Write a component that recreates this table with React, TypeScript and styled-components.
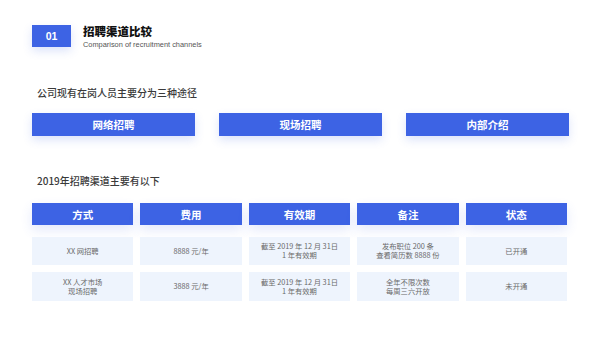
import React from "react";
import styled, { createGlobalStyle } from "styled-components";

const Global = createGlobalStyle`
  html, body { margin: 0; padding: 0; background: #ffffff; }
  body { font-family: "Noto Sans CJK SC", "Noto Sans", "Liberation Sans", sans-serif; }
  * { box-sizing: border-box; }
`;

const BLUE = "#3d63e4";

const Page = styled.div`
  width: 600px;
  height: 337px;
  background: #ffffff;
  padding: 25px 33px 0 32px;
  display: flex;
  flex-direction: column;
  overflow: hidden;
`;

const Header = styled.div`
  display: flex;
  align-items: flex-start;
  gap: 12px;
`;

const Badge = styled.div`
  width: 39px;
  height: 22px;
  background: ${BLUE};
  color: #fff;
  font-family: "Liberation Sans", sans-serif;
  font-weight: 700;
  font-size: 10.5px;
  display: flex;
  align-items: center;
  justify-content: center;
  box-shadow: 0 4px 10px rgba(61, 99, 228, 0.18);
`;

const TitleBlock = styled.div`
  display: flex;
  flex-direction: column;
  margin-top: -1px;
`;

const Title = styled.div`
  font-size: 11.5px;
  font-weight: 900;
  color: #111;
  line-height: 15px;
`;

const Subtitle = styled.div`
  font-family: "Liberation Sans", sans-serif;
  font-size: 7.4px;
  color: #555;
  line-height: 9px;
  margin-top: 1px;
`;

const SectionLabel = styled.div<{ $top: number }>`
  margin-top: ${(p) => p.$top}px;
  margin-left: 5px;
  font-size: 10px;
  color: #3a3a3a;
  font-weight: 500;
  line-height: 14px;
`;

const ButtonRow = styled.div`
  margin-top: 13px;
  display: grid;
  grid-template-columns: repeat(3, 163px);
  column-gap: 24px;
`;

const ChannelButton = styled.div`
  height: 23px;
  background: ${BLUE};
  color: #fff;
  font-size: 10.5px;
  font-weight: 700;
  display: flex;
  align-items: center;
  justify-content: center;
  box-shadow: 0 4px 10px rgba(61, 99, 228, 0.18);
`;

const Table = styled.div`
  margin-top: 15px;
  display: grid;
  grid-template-columns: repeat(5, 1fr);
  column-gap: 7px;
  width: 535px;
`;

const HeadCell = styled.div`
  height: 22px;
  background: ${BLUE};
  color: #fff;
  font-size: 10.5px;
  font-weight: 700;
  display: flex;
  align-items: center;
  justify-content: center;
  box-shadow: 0 5px 12px rgba(61, 99, 228, 0.14);
  margin-bottom: 12px;
`;

const BodyCell = styled.div<{ $h: number }>`
  height: ${(p) => p.$h}px;
  background: #eef4fd;
  color: #6a6a6a;
  font-size: 7.3px;
  line-height: 9px;
  text-align: center;
  display: flex;
  flex-direction: column;
  align-items: center;
  justify-content: center;
  margin-bottom: 7px;
`;

const heads = ["方式", "费用", "有效期", "备注", "状态"];
const rows: { h: number; cells: string[][] }[] = [
  {
    h: 28,
    cells: [
      ["XX 网招聘"],
      ["8888 元/年"],
      ["截至 2019 年 12 月 31日", "1 年有效期"],
      ["发布职位 200 条", "查看简历数 8888 份"],
      ["已开通"],
    ],
  },
  {
    h: 29,
    cells: [
      ["XX 人才市场", "现场招聘"],
      ["3888 元/年"],
      ["截至 2019 年 12 月 31日", "1 年有效期"],
      ["全年不限次数", "每周三六开放"],
      ["未开通"],
    ],
  },
];

export default function App() {
  return (
    <>
      <Global />
      <Page>
        <Header>
          <Badge>01</Badge>
          <TitleBlock>
            <Title>招聘渠道比较</Title>
            <Subtitle>Comparison of recruitment channels</Subtitle>
          </TitleBlock>
        </Header>
        <SectionLabel $top={37}>公司现有在岗人员主要分为三种途径</SectionLabel>
        <ButtonRow>
          <ChannelButton>网络招聘</ChannelButton>
          <ChannelButton>现场招聘</ChannelButton>
          <ChannelButton>内部介绍</ChannelButton>
        </ButtonRow>
        <SectionLabel $top={38}>2019年招聘渠道主要有以下</SectionLabel>
        <Table>
          {heads.map((h) => (
            <HeadCell key={h}>{h}</HeadCell>
          ))}
          {rows.map((r, i) =>
            r.cells.map((lines, j) => (
              <BodyCell key={`${i}-${j}`} $h={r.h}>
                {lines.map((l) => (
                  <span key={l}>{l}</span>
                ))}
              </BodyCell>
            ))
          )}
        </Table>
      </Page>
    </>
  );
}
